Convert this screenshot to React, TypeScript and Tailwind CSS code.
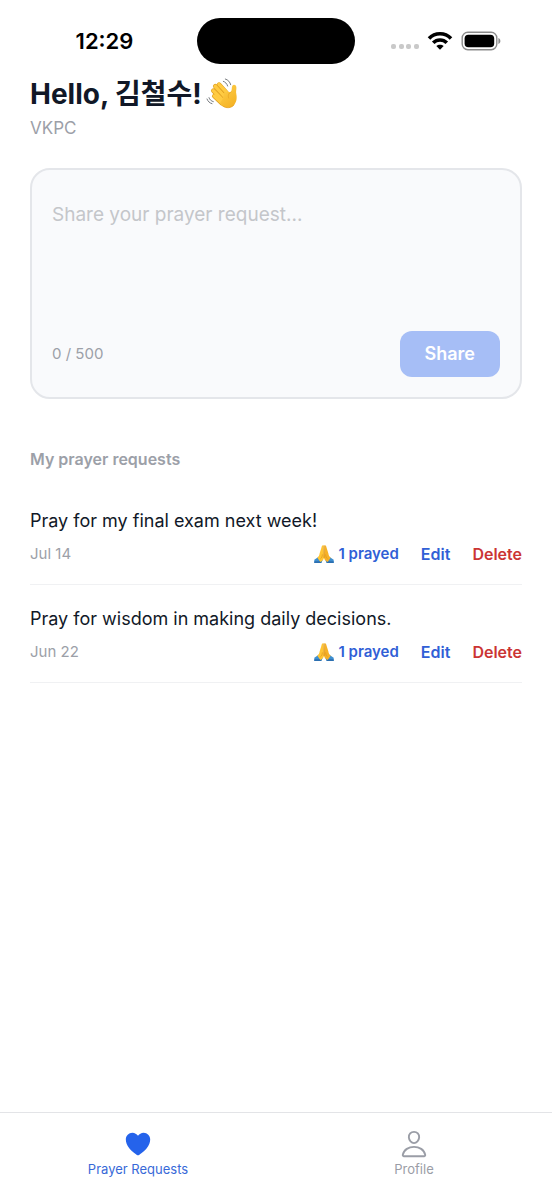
import { useState } from "react";
import { IoHeart, IoPersonOutline } from "react-icons/io5";

const MAX_LENGTH = 500;

const requests = [
  { id: 1, text: "Pray for my final exam next week!", date: "Jul 14", prayed: 1 },
  { id: 2, text: "Pray for wisdom in making daily decisions.", date: "Jun 22", prayed: 1 },
];

function WavingHand() {
  return (
    <svg viewBox="0 0 96 96" className="size-8 shrink-0" role="img" aria-label="Waving hand">
      <defs>
        <linearGradient id="hand" x1="0" y1="0" x2="0.6" y2="1">
          <stop offset="0" stopColor="#ffd24f" />
          <stop offset="1" stopColor="#f5b325" />
        </linearGradient>
      </defs>
      <g fill="none" strokeLinecap="round">
        <g stroke="#e0a021" strokeWidth="14">
          <path d="M39 20 L66 50" />
          <path d="M28 25 L58 58" />
          <path d="M22 38 L50 67" />
          <path d="M25 54 L48 76" />
        </g>
        <g stroke="#ffcb42" strokeWidth="10">
          <path d="M39 19 L68 50" />
          <path d="M28 25 L60 60" />
          <path d="M22 38 L54 70" />
          <path d="M25 54 L50 77" />
        </g>
      </g>
      <path
        d="M55 43 L74 42 C79 36 76 29 79 23 C82 18 90 19 91 27 C92 35 89 40 91 49 C94 64 90 76 82 83 C72 92 58 91 48 83 L42 76 L50 62 Z"
        fill="url(#hand)"
      />
      <g fill="none" strokeLinecap="round">
        <path d="M75 42 C67 46 65 53 68 60" stroke="#e3a022" strokeWidth="2" />
        <path d="M50 84 C61 92 75 91 84 81" stroke="#e29b20" strokeWidth="2" />
        <g stroke="#555a60" strokeWidth="2.4">
          <path d="M52 10 C58 12 63 17 65 24" />
          <path d="M58 3 C67 6 72 12 74 20" />
          <path d="M9 59 C11 65 15 69 22 71" />
          <path d="M3 63 C6 71 11 75 18 77" />
        </g>
      </g>
    </svg>
  );
}

function PrayingHands() {
  return (
    <svg viewBox="0 0 60 56" className="h-5 w-5 shrink-0" aria-hidden="true">
      <path d="M1 45 L14 36 L26 46 L22 55 H1 Z" fill="#3d8fd1" />
      <path d="M59 45 L46 36 L34 46 L38 55 H59 Z" fill="#3d8fd1" />
      <path d="M1 50 L22 50 L22 55 H1 Z M38 50 H59 V55 H38 Z" fill="#2c6fb0" />
      <path d="M29 2 C25 0 23 4 22 10 L17 26 C16 33 14 36 10 39 L19 52 C26 49 30 44 30 38 Z" fill="#ffc533" />
      <path d="M31 2 C35 0 37 4 38 10 L43 26 C44 33 46 36 50 39 L41 52 C34 49 30 44 30 38 Z" fill="#f6b127" />
      <path d="M30 3 V40" stroke="#cf8516" strokeWidth="2" />
      <path d="M25 29 C25 36 23 40 19 43 M35 29 C35 36 37 40 41 43" stroke="#dc951d" strokeWidth="2" fill="none" />
    </svg>
  );
}

function StatusBar() {
  return (
    <div className="grid grid-cols-[1fr_158px_1fr] items-center pt-[18px]">
      <span className="pl-3 text-center text-[22px] leading-7 font-semibold text-black">12:29</span>
      <div className="h-[46px] rounded-full bg-black" />
      <div className="flex items-center justify-center gap-2 pr-4">
        <svg viewBox="0 0 28 20" className="h-5 w-7" aria-hidden="true">
          <g fill="#c9c9c9">
            <rect x="0" y="13" width="5" height="5" rx="2" />
            <rect x="8" y="13" width="5" height="5" rx="2" />
            <rect x="15" y="13" width="5" height="5" rx="2" />
            <rect x="23" y="13" width="5" height="5" rx="2" />
          </g>
        </svg>
        <svg viewBox="0 0 26 20" className="h-5 w-[26px]" aria-hidden="true">
          <g fill="none" stroke="#000" strokeWidth="3.6">
            <path d="M2 7.4 C8 1.2 18 1.2 24 7.4" />
            <path d="M6.2 11.8 C10 8 16 8 19.8 11.8" />
          </g>
          <path d="M13 18.8 L9.3 15.1 C11.3 13.2 14.7 13.2 16.7 15.1 Z" fill="#000" />
        </svg>
        <svg viewBox="0 0 40 20" className="h-5 w-10" aria-hidden="true">
          <rect x="1.2" y="1.3" width="34.6" height="17.4" rx="5.6" fill="none" stroke="#8b8b8b" strokeWidth="1.4" />
          <rect x="3.6" y="3.8" width="29.6" height="12.4" rx="3.8" fill="#000" />
          <path d="M37.4 7 C40 8 40 12 37.4 13 Z" fill="#8b8b8b" />
        </svg>
      </div>
    </div>
  );
}

export default function App() {
  const [text, setText] = useState("");

  return (
    <div className="flex min-h-screen flex-col bg-white font-['Inter','Noto_Sans_CJK_KR',sans-serif]">
      <StatusBar />

      <main className="flex-1 px-[30px] pt-3">
        <h1 className="flex items-center gap-1 text-[28px] leading-9 font-bold text-[#111827]">
          Hello, 김철수! <WavingHand />
        </h1>
        <p className="mt-1 text-[17px] leading-6 text-[#9ca0a8]">VKPC</p>

        <form
          onSubmit={(e) => e.preventDefault()}
          className="mt-7 rounded-[20px] border-2 border-[#e4e6ea] bg-[#f9fafc] p-5"
        >
          <textarea
            aria-label="Prayer request"
            placeholder="Share your prayer request..."
            value={text}
            maxLength={MAX_LENGTH}
            onChange={(e) => setText(e.target.value)}
            className="block h-[141px] w-full resize-none bg-transparent pt-[11px] text-[19px] leading-7 text-[#111827] outline-none placeholder:text-[#c4c6ca]"
          />
          <div className="flex items-center justify-between">
            <span className="text-[15px] leading-5 text-[#9ca0a8]">
              {text.length} / {MAX_LENGTH}
            </span>
            <button
              type="submit"
              disabled={!text.trim()}
              className="rounded-xl bg-[#2563eb] px-[25px] py-[9px] text-lg leading-7 font-semibold text-white disabled:bg-[#a6bef6]"
            >
              Share
            </button>
          </div>
        </form>

        <h2 className="mt-12 text-base leading-6 font-semibold text-[#9ca0a8]">My prayer requests</h2>

        <ul className="mt-9">
          {requests.map((request) => (
            <li key={request.id} className="mb-5 border-b border-[#f0f1f3] pb-[18px]">
              <p className="text-lg leading-7 text-[#111827]">{request.text}</p>
              <div className="mt-[7px] flex items-center justify-between leading-6">
                <span className="text-[15px] text-[#9ca0a8]">{request.date}</span>
                <div className="flex items-center gap-[22px] font-semibold text-[#315fd6]">
                  <span className="flex items-center gap-1 text-[15px]">
                    <PrayingHands />
                    {request.prayed} prayed
                  </span>
                  <button type="button" className="text-base">Edit</button>
                  <button type="button" className="text-base text-[#cb3434]">Delete</button>
                </div>
              </div>
            </li>
          ))}
        </ul>
      </main>

      <nav className="grid grid-cols-2 border-t border-[#e3e4e7] pt-4 pb-[21px] text-[13px] leading-5">
        <a href="#requests" aria-current="page" className="flex flex-col items-center text-[#3869d8]">
          <IoHeart size={30} color="#2563eb" />
          Prayer Requests
        </a>
        <a href="#profile" className="flex flex-col items-center text-[#9a9da6]">
          <IoPersonOutline size={30} />
          Profile
        </a>
      </nav>
    </div>
  );
}
